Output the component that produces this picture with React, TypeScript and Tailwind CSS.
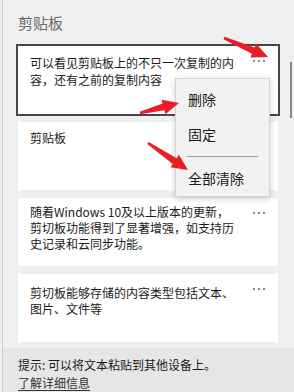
import React from 'react'

type Pt = [number, number]

// build a tapered arrow polygon from tail to tip
function arrowPoints(tail: Pt, tip: Pt, headLen = 16, headW = 15, tailW = 2.5, neckW = 7) {
  const dx = tip[0] - tail[0]
  const dy = tip[1] - tail[1]
  const len = Math.hypot(dx, dy)
  const ux = dx / len
  const uy = dy / len
  const nx = -uy
  const ny = ux
  const bx = tip[0] - ux * headLen
  const by = tip[1] - uy * headLen
  const p = (x: number, y: number, w: number, s: number) => `${x + nx * w * s},${y + ny * w * s}`
  return [
    p(tail[0], tail[1], tailW / 2, 1),
    p(bx, by, neckW / 2, 1),
    p(bx, by, headW / 2, 1),
    `${tip[0]},${tip[1]}`,
    p(bx, by, headW / 2, -1),
    p(bx, by, neckW / 2, -1),
    p(tail[0], tail[1], tailW / 2, -1),
  ].join(' ')
}

const arrows: { tail: Pt; tip: Pt }[] = [
  { tail: [224, 38], tip: [268, 57] },
  { tail: [140, 113], tip: [179, 103] },
  { tail: [148, 143], tip: [188, 170] },
]

function Dots() {
  return (
    <div className="flex gap-[3px] pt-[14px]">
      <span className="w-[2px] h-[2px] bg-[#8a8a8a]" />
      <span className="w-[2px] h-[2px] bg-[#8a8a8a]" />
      <span className="w-[2px] h-[2px] bg-[#8a8a8a]" />
    </div>
  )
}

interface ClipProps {
  lines: string[]
  pad: string
  active?: boolean
}

function ClipCard({ lines, pad, active }: ClipProps) {
  return (
    <div
      className={
        'flex w-[260px] h-[68px] bg-white pl-[12px] pr-[13px] ' +
        (active ? 'outline-2 outline-[#474747]' : '')
      }
    >
      <div className={'w-[214px] text-[12px] leading-[16px] text-[#1a1a1a] ' + pad}>
        {lines.map((l, i) => (
          <div key={i} className="whitespace-nowrap">{l}</div>
        ))}
      </div>
      <div className="ml-auto">
        <Dots />
      </div>
    </div>
  )
}

export default function App() {
  return (
    <div
      className="relative w-[294px] h-[392px] overflow-hidden bg-[#f0f0f0] pl-[2px]"
      style={{ fontFamily: '"Noto Sans CJK SC", "Noto Sans", sans-serif' }}
    >
      <div className="flex flex-col h-full border-l border-[#cdcdcd]">
        <div className="pl-[15px] pt-[13px]">
          <div className="text-[15px] leading-[20px] text-[#6b6b6b]">剪贴板</div>
          <div className="flex flex-col gap-2 mt-[13px]">
            <ClipCard active pad="pt-[8px] leading-[17px]" lines={['可以看见剪贴板上的不只一次复制的内', '容，还有之前的复制内容']} />
            <ClipCard pad="pt-[8px]" lines={['剪贴板']} />
            <ClipCard
              pad="pt-[6px]"
              lines={['随着Windows 10及以上版本的更新，', '剪切板功能得到了显著增强，如支持历', '史记录和云同步功能。']}
            />
            <ClipCard pad="pt-[11px]" lines={['剪切板能够存储的内容类型包括文本、', '图片、文件等']} />
          </div>
        </div>
        <div className="mt-[6px] flex-1 bg-[#e6e6e6] pl-[15px] pt-[8px] text-[12px] leading-[18px] text-[#1a1a1a]">
          <div>提示: 可以将文本粘贴到其他设备上。</div>
          <div className="underline underline-offset-2 text-[#333333]">了解详细信息</div>
        </div>
      </div>

      {/* scrollbar */}
      <div className="absolute left-[290px] top-[62px] w-[2px] h-[56px] bg-[#8a8a8a]" />

      {/* context menu */}
      <div className="absolute left-[175px] top-[78px] w-[95px] h-[119px] bg-[#f2f2f2] border border-[#d4d4d4] shadow-[0_2px_6px_rgba(0,0,0,0.18)] pt-[3px] text-[14px] text-[#1a1a1a]">
        <div className="h-[35px] flex items-center pl-[12px]">删除</div>
        <div className="h-[35px] flex items-center pl-[12px]">固定</div>
        <div className="mx-[11px] mt-[4px] h-[1px] bg-[#9a9a9a]" />
        <div className="h-[36px] mt-[3px] flex items-center pl-[12px]">全部清除</div>
      </div>

      {/* annotation arrows */}
      <svg className="absolute inset-0 pointer-events-none" width="294" height="392" viewBox="0 0 294 392">
        {arrows.map((a, i) => (
          <polygon key={i} points={arrowPoints(a.tail, a.tip)} fill="#ec1c24" strokeLinejoin="round" />
        ))}
      </svg>
    </div>
  )
}
